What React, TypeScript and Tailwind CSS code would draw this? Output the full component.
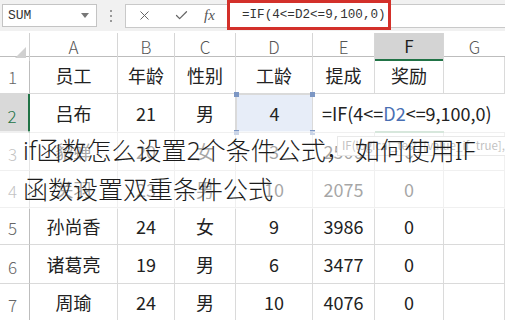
import { Check, X } from "lucide-react";

const cols = "grid grid-cols-[30px_88px_57px_61px_77px_62px_69px_1fr]";
const font = { fontFamily: '"Noto Sans CJK SC", "Noto Sans", sans-serif' };

const rows: { n: number; h: string; cells: string[] }[] = [
  { n: 3, h: "h-[38px]", cells: ["貂蝉", "20", "女", "3", "2500", "0", ""] },
  { n: 4, h: "h-[37px]", cells: ["关羽", "23", "男", "10", "2075", "0", ""] },
  { n: 5, h: "h-[37px]", cells: ["孙尚香", "24", "女", "9", "3986", "0", ""] },
  { n: 6, h: "h-[39px]", cells: ["诸葛亮", "19", "男", "6", "3477", "0", ""] },
  { n: 7, h: "h-[38px]", cells: ["周瑜", "24", "男", "10", "4076", "0", ""] },
];

function RowNum({ n, active }: { n: number; active?: boolean }) {
  return (
    <div
      className={`flex items-end justify-center pr-[4px] pb-[4px] text-[17px] font-light border-b border-[#d9d9d9] ${
        active
          ? "bg-[#d9d9d9] text-[#217346] border-r-2 border-r-[#217346]"
          : "text-[#666] border-r border-r-[#bdbdbd]"
      }`}
    >
      {n}
    </div>
  );
}

function Cell({ children, className = "" }: { children?: React.ReactNode; className?: string }) {
  return (
    <div
      className={`flex items-center justify-center border-r border-b border-[#dadada] text-[18px] text-[#222] ${className}`}
    >
      {children}
    </div>
  );
}

export default function App() {
  return (
    <div className="relative h-[320px] w-[505px] overflow-hidden bg-white" style={font}>
      {/* formula bar */}
      <div className="flex h-[31px] items-center bg-[#f1f1f1]">
        <div className="ml-[2px] flex h-[23px] w-[95px] items-center justify-between border border-[#c4c4c4] bg-white pl-[5px] pr-[7px]">
          <span className="text-[13px] text-[#333]" style={{ fontFamily: '"Liberation Mono", monospace' }}>
            SUM
          </span>
          <svg width="8" height="5" viewBox="0 0 8 5">
            <path d="M0 0h8L4 5z" fill="#777" />
          </svg>
        </div>
        <div className="flex w-[28px] flex-col items-center gap-[3px]">
          <span className="h-[2px] w-[2px] bg-[#999]" />
          <span className="h-[2px] w-[2px] bg-[#999]" />
          <span className="h-[2px] w-[2px] bg-[#999]" />
        </div>
        <div className="flex h-[24px] w-[102px] items-center border border-r-0 border-[#c9c9c9] bg-white pl-[11px] text-[#666]">
          <X size={15} strokeWidth={1.6} />
          <Check size={15} strokeWidth={2} className="ml-[22px]" />
          <span
            className="ml-[15px] text-[15px] italic text-[#555]"
            style={{ fontFamily: '"Liberation Serif", serif' }}
          >
            fx
          </span>
        </div>
        <div className="flex h-[30px] w-[164px] items-center self-start border-[3px] border-[#d3302a] bg-white pl-[12px]">
          <span className="text-[12.6px] text-[#333]" style={{ fontFamily: '"Liberation Mono", monospace' }}>
            =IF(4&lt;=D2&lt;=9,100,0)
          </span>
        </div>
        <div className="h-[24px] flex-1 border-y border-[#c9c9c9] bg-white" />
      </div>

      <div className="h-[2px] bg-white" />

      {/* column headers */}
      <div className={`${cols} h-[24px] border-b border-[#bdbdbd] text-[17px] font-light text-[#555]`}>
        <div className="relative border-r border-[#d0d0d0]">
          <svg className="absolute bottom-[3px] right-[3px]" width="11" height="11" viewBox="0 0 11 11">
            <path d="M11 0v11H0z" fill="#d0d0d0" />
          </svg>
        </div>
        {["A", "B", "C", "D", "E"].map((c) => (
          <div key={c} className="flex items-center justify-center border-r border-[#d6d6d6]">
            {c}
          </div>
        ))}
        <div className="flex items-center justify-center border-r border-b-2 border-[#d6d6d6] border-b-[#217346] bg-[#d4d4d4] font-normal text-[#1f1f1f]">
          F
        </div>
        <div className="flex items-center justify-center">G</div>
      </div>

      {/* row 1 */}
      <div className={`${cols} h-[37px]`}>
        <RowNum n={1} />
        {["员工", "年龄", "性别", "工龄", "提成", "奖励", ""].map((t, i) => (
          <Cell key={i}>{t}</Cell>
        ))}
      </div>

      {/* row 2 */}
      <div className={`${cols} h-[39px]`}>
        <RowNum n={2} active />
        <Cell>吕布</Cell>
        <Cell>21</Cell>
        <Cell>男</Cell>
        <Cell className="relative border-[1.5px] border-[#7d97c4] bg-[#e7edf8]">
          4
          <span className="absolute -left-[3px] -top-[3px] h-[5px] w-[5px] bg-[#7d97c4]" />
          <span className="absolute -right-[3px] -top-[3px] h-[5px] w-[5px] bg-[#7d97c4]" />
          <span className="absolute -bottom-[3px] -left-[3px] h-[5px] w-[5px] bg-[#7d97c4]" />
          <span className="absolute -bottom-[3px] -right-[3px] h-[5px] w-[5px] bg-[#7d97c4]" />
        </Cell>
        <div className="relative col-span-3 flex items-center whitespace-nowrap border-b border-[#dadada] pl-[9px] text-[18px] text-[#222]">
          =IF(4&lt;=<span className="text-[#4a6fb3]">D2</span>&lt;=9,100,0)
          <span className="absolute -bottom-px left-[62px] h-[2px] w-[69px] bg-[#9cc3a8]" />
        </div>
      </div>

      {rows.map((r) => (
        <div key={r.n} className={`${cols} ${r.h}`}>
          <RowNum n={r.n} />
          {r.cells.map((t, i) => (
            <Cell key={i}>{t}</Cell>
          ))}
        </div>
      ))}

      {/* function tooltip */}
      <div className="absolute left-[337px] top-[136px] flex h-[20px] w-[200px] items-center whitespace-nowrap border border-[#c8c8c8] bg-white pl-[4px] text-[11.5px] text-[#666]">
        IF(logical_test, [value_if_true], [value_if_false])
      </div>

      {/* title overlay */}
      <div className="absolute left-0 top-[131px] h-[78px] w-full bg-white/60" />
      <div
        className="absolute left-[23px] top-[131px] w-[482px] text-[25px] font-light leading-[39px] text-[#1c1c1c]"
        style={{ fontFamily: '"Noto Sans", "Noto Sans CJK SC", sans-serif' }}
      >
        <div className="whitespace-nowrap">
          if函数怎么设置2个条件公式<span className="tracking-[4px]">，</span>如何使用IF
        </div>
        <div className="whitespace-nowrap">函数设置双重条件公式</div>
      </div>
    </div>
  );
}
